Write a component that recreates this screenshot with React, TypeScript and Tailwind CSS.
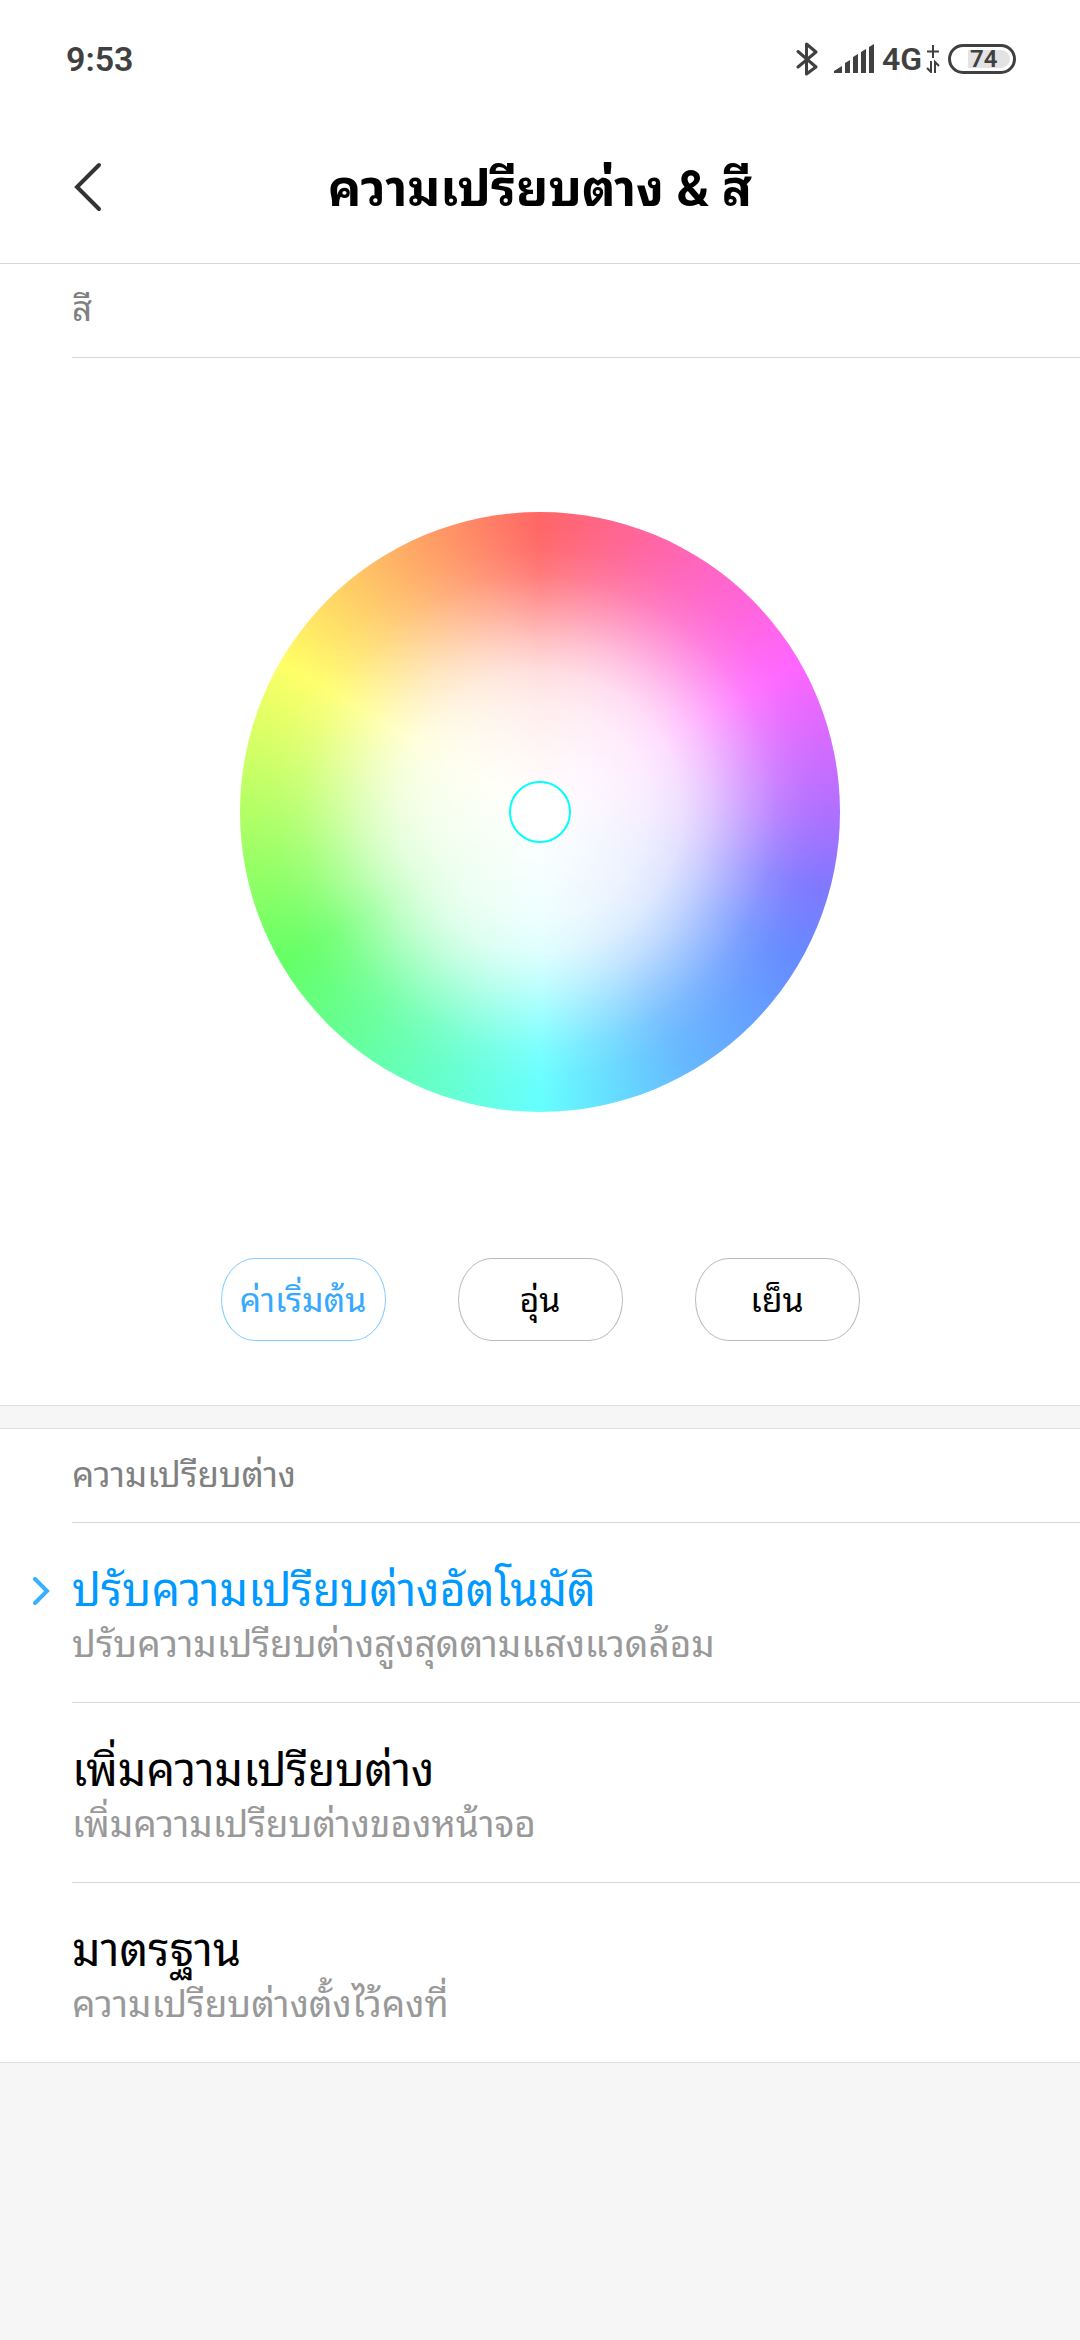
import { useState } from 'react'

const presets = ['ค่าเริ่มต้น', 'อุ่น', 'เย็น']

const contrasts = [
  { title: 'ปรับความเปรียบต่างอัตโนมัติ', note: 'ปรับความเปรียบต่างสูงสุดตามแสงแวดล้อม' },
  { title: 'เพิ่มความเปรียบต่าง', note: 'เพิ่มความเปรียบต่างของหน้าจอ' },
  { title: 'มาตรฐาน', note: 'ความเปรียบต่างตั้งไว้คงที่' },
]

function StatusBar() {
  return (
    <div className="flex h-[118px] items-center justify-between px-16 text-[#404040]">
      <span className="pl-[2px] text-[34px] leading-10 font-semibold">9:53</span>
      <div className="flex items-center">
        <svg className="mr-4 h-[34px] w-[22px]" viewBox="0 0 22 34" fill="none" stroke="currentColor" strokeWidth="3">
          <path d="M2 9.5 20 25 10.500 32V2L20 10 2 25" strokeLinejoin="round" strokeLinecap="round" />
        </svg>
        <svg className="mr-2 h-[30px] w-[40px]" viewBox="0 0 40 30" fill="currentColor">
          <path d="M0 29v-2l8-5v7zM11 29V19l5-3v13zM19 29V13l5-3v19zM27 29V8l5-3v24zM35 29V3l5-3v29z" />
        </svg>
        <span className="mr-1 text-[32px] leading-10 font-semibold">4G</span>
        <svg className="mr-2 h-[28px] w-[14px]" viewBox="0 0 14 28" fill="none" stroke="currentColor" strokeWidth="2">
          <path d="M7 0v13M1 6.500h12M5 16v11L1 23M9 28V17l4 4" />
        </svg>
        <div className="flex h-[30px] w-[68px] items-center rounded-full border-3 px-[3px]">
          <div className="ml-[14px] flex h-[18px] flex-1 items-center rounded-r-full bg-[#e3e3e3]">
            <span className="pl-[2px] text-[24px] leading-6 font-semibold">74</span>
          </div>
        </div>
      </div>
    </div>
  )
}

function ColorWheel() {
  return (
    <div className="relative h-[600px] w-[600px] rounded-full bg-[radial-gradient(closest-side,rgb(255_255_255/1)_0%,rgb(255_255_255/0.94)_20%,rgb(255_255_255/0.88)_36%,rgb(255_255_255/0.78)_47%,rgb(255_255_255/0.6)_57%,rgb(255_255_255/0.36)_68%,rgb(255_255_255/0.14)_79%,rgb(255_255_255/0.04)_88%,rgb(255_255_255/0)_96%),conic-gradient(#ff6666,#ff66b8_30deg,#ff66ff_60deg,#b070ff_90deg,#8078ff_105deg,#668cff_120deg,#66b8ff_150deg,#66ffff_180deg,#66ff66_240deg,#ffff66_300deg,#ff6666)]">
      <button
        aria-label="สี"
        className="absolute top-1/2 left-1/2 h-[62px] w-[62px] -translate-x-1/2 -translate-y-1/2 rounded-full border-2 border-[#00ffff] bg-white"
      />
    </div>
  )
}

export default function App() {
  const [preset, setPreset] = useState(0)
  const [contrast, setContrast] = useState(0)

  return (
    <main className="min-h-screen bg-[#f6f6f6] font-['Roboto','Noto_Sans_Thai_Looped','Noto_Sans_Thai','Noto_Sans',sans-serif] text-black">
      <header className="border-b border-[#d8d8d8] bg-white">
        <StatusBar />
        <div className="grid h-[145px] grid-cols-[144px_1fr_144px] items-start pt-[38px]">
          <button aria-label="ย้อนกลับ" className="pt-1 pl-[72px] text-[#333333]">
            <svg className="h-[52px] w-[30px]" viewBox="0 0 30 52" fill="none" stroke="currentColor" strokeWidth="4">
              <path d="M27 5 5 27l22 22" strokeLinecap="round" />
            </svg>
          </button>
          <h1 className="text-center text-[50px] leading-[66px] font-bold">ความเปรียบต่าง &amp; สี</h1>
        </div>
      </header>

      <section className="border-b border-[#e0e0e0] bg-white">
        <h2 className="ml-[72px] flex h-[94px] items-center border-b border-[#d8d8d8] text-[35px] text-[#808080]">สี</h2>
        <div className="flex justify-center pt-[154px]">
          <ColorWheel />
        </div>
        <div className="flex justify-center gap-[72px] pt-[146px] pb-16">
          {presets.map((name, i) => (
            <button
              key={name}
              onClick={() => setPreset(i)}
              className={`h-[83px] w-[165px] rounded-[34px/42px] border pt-[2px] text-[34px] ${
                i === preset ? 'border-[#84ccff] text-[#36a9ff]' : 'border-[#bbbbbb]'
              }`}
            >
              {name}
            </button>
          ))}
        </div>
      </section>

      <section className="mt-[22px] border-y border-[#e0e0e0] bg-white">
        <h2 className="ml-[72px] flex h-[94px] items-center border-b border-[#d8d8d8] pt-[2px] text-[35px] text-[#808080]">
          ความเปรียบต่าง
        </h2>
        {contrasts.map((item, i) => (
          <button key={item.title} onClick={() => setContrast(i)} className="flex w-full text-left">
            <span className="w-[72px] pt-[54px] pl-8 text-[#36b0ff]">
              {i === contrast && (
                <svg className="h-[28px] w-[18px]" viewBox="0 0 18 28" fill="none" stroke="currentColor" strokeWidth="4">
                  <path d="M3 2l12 12L3 26" strokeLinecap="round" />
                </svg>
              )}
            </span>
            <span
              className={`box-content flex h-[179px] flex-1 flex-col ${
                i < contrasts.length - 1 ? 'border-b border-[#d8d8d8]' : ''
              }`}
            >
              <span className={`pt-[38px] text-[45px] leading-[60px] ${i === contrast ? 'text-[#0099ff]' : ''}`}>
                {item.title}
              </span>
              <span className="text-[37px] leading-[48px] text-[#999999]">{item.note}</span>
            </span>
          </button>
        ))}
      </section>
    </main>
  )
}
